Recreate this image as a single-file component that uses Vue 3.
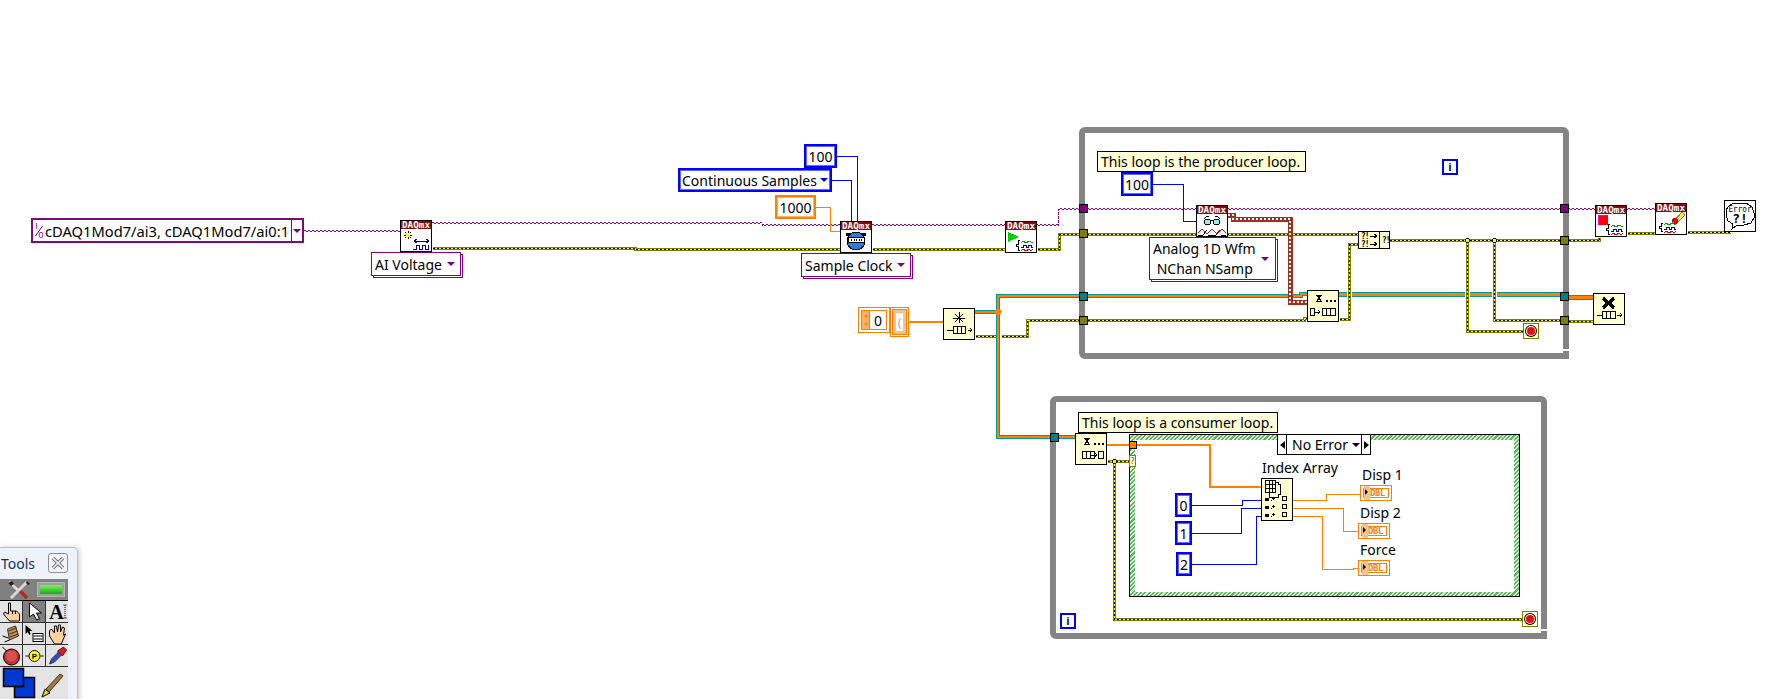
<script setup>
import { computed } from 'vue'

const layers = {
  task: ['task-a', 'task-b'],
  err: ['err-a', 'err-b', 'err-c'],
  wave: ['wave-a', 'wave-b'],
  queue: ['queue-a', 'queue-b'],
  qbold: ['qbold-a', 'qbold-b'],
  arr: ['arr'],
  num: ['num'],
  int: ['int']
}

const wires = [
  ['task', 'M304 230H400'],
  ['task', 'M432 222H762V224H840'],
  ['task', 'M872 224H1058V208H1083'],
  ['task', 'M1087 208H1563'],
  ['task', 'M1568 208H1655'],
  ['err', 'M432 248H635V249H840'],
  ['err', 'M872 249H1005'],
  ['err', 'M1037 249H1059V234H1358'],
  ['err', 'M975 336H995'],
  ['err', 'M1001 336H1027V320H1083'],
  ['err', 'M1083 320H1304V318H1307'],
  ['err', 'M1339 319H1349V244H1358'],
  ['err', 'M1389 240H1563'],
  ['err', 'M1467 240V331H1523'],
  ['err', 'M1494 240V320H1563'],
  ['err', 'M1564 240H1599V237'],
  ['err', 'M1627 233H1655'],
  ['err', 'M1687 232H1730'],
  ['err', 'M1564 321H1593'],
  ['err', 'M1107 461H1129'],
  ['err', 'M1114 461V619H1522'],
  ['queue', 'M975 312H998'],
  ['queue', 'M1083 296H998V437H1075'],
  ['queue', 'M1083 296H1301V294H1307'],
  ['qbold', 'M1339 294H1347'],
  ['qbold', 'M1352 294H1465'],
  ['qbold', 'M1470 294H1492'],
  ['qbold', 'M1497 294H1563'],
  ['qbold', 'M1564 297H1593'],
  ['wave', 'M1228 215H1233V219H1290V302H1307'],
  ['arr', 'M909 322H943'],
  ['arr', 'M1107 445H1129'],
  ['arr', 'M1137 445H1210V487H1261'],
  ['int', 'M837 156.5H857.5V221'],
  ['int', 'M832 180.5H851.5V221'],
  ['num', 'M816 207.5H830.5V231.5H840'],
  ['int', 'M1153 184.5H1183.5V221.5H1196'],
  ['int', 'M1192 505.5H1242.5V500.5H1261'],
  ['int', 'M1192 533.5H1241.5V508.5H1261'],
  ['int', 'M1192 564.5H1256.5V516.5H1261'],
  ['num', 'M1293 500.5H1326.5V494.5H1360'],
  ['num', 'M1293 508.5H1343.5V531.5H1358'],
  ['num', 'M1293 516.5H1322.5V569.5H1353.5V568.5H1358']
]

const strokes = computed(() =>
  wires.flatMap(([kind, d]) => layers[kind].map(cls => ({ d, cls })))
)

const loops = [
  { x: 1079, y: 127, w: 490, h: 232 },
  { x: 1050, y: 396, w: 497, h: 243 }
]

const tunnels = [
  { x: 1079, y: 204, c: 'purple' },
  { x: 1079, y: 229, c: 'olive' },
  { x: 1079, y: 292, c: 'teal' },
  { x: 1079, y: 316, c: 'olive' },
  { x: 1560, y: 204, c: 'purple' },
  { x: 1560, y: 236, c: 'olive' },
  { x: 1560, y: 292, c: 'teal' },
  { x: 1560, y: 316, c: 'olive' },
  { x: 1050, y: 433, c: 'teal' }
]

const constants = [
  { x: 804, y: 144, w: 33, h: 24, t: '100', c: 'blue' },
  { x: 775, y: 195, w: 41, h: 24, t: '1000', c: 'orange' },
  { x: 1121, y: 172, w: 32, h: 24, t: '100', c: 'blue' },
  { x: 1175, y: 493, w: 17, h: 24, t: '0', c: 'blue' },
  { x: 1175, y: 521, w: 17, h: 24, t: '1', c: 'blue' },
  { x: 1176, y: 552, w: 16, h: 24, t: '2', c: 'blue' }
]

const rings = [
  { x: 371, y: 252, w: 90, h: 24, t: 'AI Voltage' },
  { x: 801, y: 253, w: 110, h: 24, t: 'Sample Clock' }
]

const labels = [
  { x: 1262, y: 459, t: 'Index Array' },
  { x: 1362, y: 466, t: 'Disp 1' },
  { x: 1360, y: 504, t: 'Disp 2' },
  { x: 1360, y: 541, t: 'Force' }
]

const indicators = [
  { x: 1360, y: 485 },
  { x: 1358, y: 523 },
  { x: 1358, y: 560 }
]

const iters = [
  { x: 1442, y: 159 },
  { x: 1060, y: 613 }
]

const stops = [
  { x: 1523, y: 323 },
  { x: 1522, y: 611 }
]

const nodes = [
  { x: 400, y: 220, icon: 'create', daq: true },
  { x: 840, y: 221, icon: 'clock', daq: true },
  { x: 1005, y: 221, icon: 'start', daq: true },
  { x: 1196, y: 205, icon: 'read', daq: true },
  { x: 1595, y: 205, icon: 'stop', daq: true },
  { x: 1655, y: 203, icon: 'clear', daq: true },
  { x: 1724, y: 200, icon: 'error' },
  { x: 943, y: 308, icon: 'qcreate', pale: true },
  { x: 1307, y: 290, icon: 'enq', pale: true },
  { x: 1593, y: 293, icon: 'qdestroy', pale: true },
  { x: 1075, y: 433, icon: 'deq', pale: true }
]

const tools = ['hand', 'arrow', 'text', 'spool', 'list', 'grab', 'probe', 'bp', 'dropper']

function box(n) {
  return { left: n.x + 'px', top: n.y + 'px', width: n.w ? n.w + 'px' : undefined, height: n.h ? n.h + 'px' : undefined }
}
</script>

<template>
  <div class="canvas">
    <div v-for="(l, i) in loops" :key="'loop' + i" class="loop" :style="box(l)"></div>

    <!-- case structure -->
    <div class="case">
      <div class="case-inner"></div>
    </div>

    <svg class="wires" width="1788" height="699">
      <path v-for="(s, i) in strokes" :key="i" :d="s.d" :class="s.cls" fill="none" />
      <circle cx="998" cy="312" r="3" fill="#ff8000" />
      <g fill="#ffff00" stroke="#000">
        <circle cx="1467.5" cy="240.5" r="2" />
        <circle cx="1494.5" cy="240.5" r="2" />
        <circle cx="1114.5" cy="461.5" r="2" />
      </g>
    </svg>

    <div v-for="(t, i) in tunnels" :key="'tun' + i" class="tunnel" :class="t.c" :style="box(t)"></div>

    <!-- channel constant -->
    <div class="channel">
      <svg class="io-icon" width="10" height="17" viewBox="0 0 10 17">
        <text x="2.5" y="7" class="io-txt">I</text>
        <text x="7" y="15.5" class="io-txt">0</text>
        <path d="M1.5 14L8.5 4" stroke="#800080" fill="none" />
      </svg>
      <span class="channel-text">cDAQ1Mod7/ai3, cDAQ1Mod7/ai0:1</span>
      <span class="channel-drop"><b class="tri purple-tri"></b></span>
    </div>

    <div class="enum">
      <span>Continuous Samples</span>
      <b class="tri blue-tri"></b>
    </div>

    <div v-for="(c, i) in constants" :key="'c' + i" class="const" :class="c.c" :style="box(c)">{{ c.t }}</div>

    <div v-for="(r, i) in rings" :key="'r' + i" class="ring" :style="box(r)">
      <span>{{ r.t }}</span>
      <b class="tri purple-tri"></b>
    </div>

    <div class="ring ring-big">
      <span>Analog 1D Wfm<br />&nbsp;NChan NSamp</span>
      <b class="tri purple-tri"></b>
    </div>

    <div class="note note-prod">This loop is the producer loop.</div>
    <div class="note note-cons">This loop is a consumer loop.</div>

    <div v-for="(it, i) in iters" :key="'it' + i" class="iter" :style="box(it)">i</div>

    <div v-for="(s, i) in stops" :key="'s' + i" class="stop" :style="box(s)"><span class="stop-dot"></span></div>

    <!-- array constant and element -->
    <div class="numeric">
      <span class="spin"><b class="up"></b><b class="down"></b></span>
      <span class="num-val">0</span>
    </div>
    <div class="arr-const"><span>(</span></div>

    <div v-for="n in nodes" :key="n.icon" class="node" :class="{ pale: n.pale }" :style="box(n)">
      <svg width="30" height="30" viewBox="0 0 30 30">
        <template v-if="n.daq">
          <rect x="0" y="0" width="30" height="8" fill="#8c0a0a" />
          <text x="15" y="7" class="daq" textLength="28" lengthAdjust="spacingAndGlyphs">DAQmx</text>
        </template>

        <g v-if="n.icon === 'create'">
          <path d="M7 10v8M3 14h8M4 11l6 6M10 11l-6 6" stroke="#000" stroke-width="1" />
          <rect x="5" y="12" width="4" height="4" fill="#ffff00" />
          <path d="M13 20h15M13 20l3-2M13 20l3 2M28 20l-3-2M28 20l-3 2" stroke="#0000a0" fill="none" />
          <path d="M12 28h3v-4h3v4h3v-4h3v4h3v-4" stroke="#0000a0" fill="none" />
        </g>

        <g v-if="n.icon === 'clock'">
          <rect x="5" y="11" width="20" height="3" fill="#000" />
          <circle cx="15" cy="19" r="9" fill="#2c7ce0" stroke="#000" />
          <rect x="7" y="15" width="16" height="5" fill="#fff" stroke="#000" />
          <path d="M10 17v2M13 17v2M15 17v2M18 17v2M20 17v2" stroke="#000" />
        </g>

        <g v-if="n.icon === 'start'">
          <path d="M2 10l11 5-11 5z" fill="#00d000" />
        </g>

        <g v-if="n.icon === 'stop'">
          <rect x="2" y="9" width="10" height="10" fill="#ff00c0" />
          <rect x="3" y="10" width="9" height="9" fill="#ff0000" />
        </g>

        <g v-if="n.icon === 'clear'">
          <path d="M19 16l7-8 3 3-7 7z" fill="#ffe060" stroke="#a08020" />
          <circle cx="19" cy="17" r="3" fill="#e00000" />
          <path d="M14 20l4-2" stroke="#888" />
        </g>

        <g v-if="n.icon === 'start' || n.icon === 'stop' || n.icon === 'clear'">
          <path :d="n.icon === 'clear' ? 'M7 19h-2v3h-2v2h2v3h2' : 'M14 18h-2v4h-2v2h2v4h2'" stroke="#000" fill="none" />
          <g :transform="n.icon === 'clear' ? 'translate(-7,0)' : ''">
            <path d="M15 21l2-2 3 2 3-2 2 1 2 1" stroke="#00a000" fill="none" />
            <path d="M15 25h2v-2h3v2h2v-2h3v2h2" stroke="#0000d0" fill="none" />
            <path d="M15 29l2-2 3 2 3-2 2 2 2-2" stroke="#e00000" fill="none" />
          </g>
        </g>

        <g v-if="n.icon === 'read'">
          <circle cx="10.5" cy="16" r="3" fill="#a0e8e8" stroke="#000" />
          <circle cx="19.5" cy="16" r="3" fill="#a0e8e8" stroke="#000" />
          <path d="M13 14h4M7 13l3-3h2M23 13l-3-3h-2" stroke="#000" fill="none" />
          <path d="M1 29h5M11 29h8M24 29h5M6 29l4-5M19 29l4-5" stroke="#000" fill="none" />
          <path d="M1 27l4-4 5 5 5-5 5 5 5-5 4 4" stroke="#e00000" fill="none" />
        </g>

        <g v-if="n.icon === 'error'">
          <path d="M9 2h12l6 4 2 6v5l-3 5-7 2h-7l-5 4 1-5-5-3-2-6v-5l3-4z" fill="#fff" stroke="#000" />
          <text x="15" y="11" class="err-word" textLength="23" lengthAdjust="spacingAndGlyphs">Error</text>
          <text x="15" y="22" class="err-mark">?!</text>
        </g>

        <g v-if="n.icon === 'qcreate'" stroke="#000" fill="none">
          <path d="M15 3v11M9 9h12M11 5l8 8M19 5l-8 8" />
          <path d="M3 21h7M24 21h4M26 19l2 2-2 2" />
          <rect x="9.5" y="17.5" width="12" height="7" fill="#ffffd2" />
          <path d="M13.5 17v8M17.5 17v8" />
        </g>

        <g v-if="n.icon === 'enq'" stroke="#000" fill="none">
          <path d="M8 4h6M8 10h6M9 4l4 6M13 4l-4 6" />
          <path d="M18 10h2M22 10h2M26 10h2" stroke-width="2" />
          <rect x="2.5" y="17.5" width="4" height="7" />
          <path d="M6 21h6M10 19l2 2-2 2" />
          <rect x="14.5" y="17.5" width="13" height="7" />
          <path d="M18.5 18v7M22.5 18v7" />
        </g>

        <g v-if="n.icon === 'deq'" stroke="#000" fill="none">
          <path d="M8 4h6M8 10h6M9 4l4 6M13 4l-4 6" />
          <path d="M18 10h2M22 10h2M26 10h2" stroke-width="2" />
          <rect x="6.5" y="17.5" width="12" height="7" />
          <path d="M10.5 18v7M14.5 18v7" />
          <path d="M15 21h6M19 19l2 2-2 2" />
          <rect x="22.5" y="17.5" width="5" height="7" />
        </g>

        <g v-if="n.icon === 'qdestroy'" stroke="#000" fill="none">
          <path d="M9 4l11 10M20 4l-11 10" stroke-width="3.5" />
          <path d="M3 21h6M23 21h5M26 19l2 2-2 2" />
          <rect x="8.5" y="17.5" width="13" height="7" fill="#ffffd2" />
          <path d="M12.5 18v7M16.5 18v7" />
        </g>
      </svg>
    </div>

    <!-- merge errors -->
    <div class="merge">
      <svg width="30" height="16" viewBox="0 0 30 16">
        <text x="2" y="7" class="merge-txt">?!</text>
        <text x="2" y="15" class="merge-txt">?!</text>
        <path d="M11 4h7M15 2l3 2-3 2M11 12h7M15 10l3 2-3 2" stroke="#000" fill="none" />
        <path d="M20.5 0v16" stroke="#000" />
        <text x="23" y="11" class="merge-txt">?!</text>
      </svg>
    </div>

    <!-- case selector -->
    <div class="selector">
      <span class="sel-arrow"><b class="arrow-left"></b></span>
      <span class="sel-text">No Error</span>
      <b class="tri black-tri"></b>
      <span class="sel-arrow sel-right"><b class="arrow-right"></b></span>
    </div>
    <div class="tunnel-arr"></div>
    <div class="sel-term">?</div>

    <!-- index array -->
    <div class="index">
      <svg width="30" height="41" viewBox="0 0 30 41">
        <g fill="none" stroke="#000">
          <path d="M7.5 3.5h9v2h2v10h-2v3h-9z" fill="#ffffd2" />
          <path d="M3.5 1.5h10v12h-10zM3.5 5.5h10M3.5 9.5h10M7.5 1.5v12M10.5 1.5v12" fill="#ffffd2" />
        </g>
        <g v-for="r in [21, 29, 37]" :key="r">
          <rect x="3" :y="r - 2" width="4" height="3" fill="#000" />
          <path :d="`M9.5 ${r}v1M11 ${r - 3}v3M9.5 ${r - 2}h3`" stroke="#000" fill="none" />
          <rect x="20.5" :y="r - 3.5" width="4" height="4" fill="none" stroke="#000" />
        </g>
      </svg>
    </div>

    <div v-for="(l, i) in labels" :key="'l' + i" class="label" :style="box(l)">{{ l.t }}</div>

    <div v-for="(d, i) in indicators" :key="'d' + i" class="dbl" :style="box(d)">
      <span class="dbl-inner"><b class="dbl-tip"></b><span class="dbl-txt">DBL</span></span>
    </div>

    <!-- tools palette -->
    <div class="palette">
      <div class="pal-head">
        <span class="pal-title">Tools</span>
        <span class="pal-close">
          <svg width="14" height="14" viewBox="0 0 14 14">
            <path d="M2 2l10 10M12 2L2 12" stroke="#6c7076" stroke-width="3.5" fill="none" />
            <path d="M2 2l10 10M12 2L2 12" stroke="#f4f6f8" stroke-width="1.5" fill="none" />
          </svg>
        </span>
      </div>
      <div class="pal-auto">
        <svg width="24" height="20" viewBox="0 0 24 20">
          <path d="M12 10l8 8" stroke="#c02020" stroke-width="3.5" />
          <path d="M2 2l10 9" stroke="#e0e0e0" stroke-width="2.5" />
          <path d="M20 2L4 18" stroke="#d8d8d8" stroke-width="3" />
          <path d="M1 3l4-2 2 3-3 2zM20 1l3 3-2 1-2-2z" fill="#202020" />
        </svg>
        <span class="pal-led"><i></i></span>
      </div>
      <div class="pal-grid">
        <span v-for="t in tools" :key="t" class="pal-cell" :class="{ on: t === 'arrow' }">
          <svg width="21" height="20" viewBox="0 0 20 20">
            <g v-if="t === 'hand'">
              <path d="M7 1h2v8h6l3 3v7H8l-6-7 1-2 4 2z" fill="#ffd0a0" stroke="#000" />
              <path d="M11 9v3M14 9v3" stroke="#000" />
            </g>
            <path v-if="t === 'arrow'" d="M5 1v14l4-3 3 6 3-1-3-6h5z" fill="#fff" stroke="#000" />
            <g v-if="t === 'text'">
              <text x="9" y="17" class="pal-a">A</text>
              <path d="M16 3h3M16 16h3M17.5 3v13" stroke="#000" stroke-dasharray="1 1" />
            </g>
            <g v-if="t === 'spool'">
              <path d="M6 5l8-3 3 10-9 4z" fill="#c09058" stroke="#403020" />
              <path d="M7 7l8-3M8 10l8-3M8 13l9-3" stroke="#403020" />
              <path d="M1 12l6 2M3 18l5-2" stroke="#000" />
            </g>
            <g v-if="t === 'list'">
              <path d="M1 1v9l2-2 2 3 1-1-1-3h3z" fill="#000" />
              <rect x="8.5" y="9.5" width="10" height="8" fill="#fff" stroke="#000" />
              <path d="M9 12h9M9 15h9" stroke="#000" />
            </g>
            <path v-if="t === 'grab'" d="M2 7l2-2 3 4 0-7 2 0 1 6 1-7 2 0 0 7 2-5 2 1-1 7 2-1-3 7-1 3H7L2 12z" fill="#ffd0a0" stroke="#000" />
            <g v-if="t === 'probe'">
              <path d="M1 1l5 5" stroke="#000" />
              <circle cx="10" cy="11" r="8" fill="#c83030" stroke="#000" />
              <circle cx="10" cy="10" r="5.5" fill="#d85050" />
            </g>
            <g v-if="t === 'bp'">
              <circle cx="10" cy="10" r="5.5" fill="#ffff00" stroke="#000" />
              <text x="10" y="13" class="pal-p">P</text>
              <path d="M1 10h3M16 10h3" stroke="#000" />
            </g>
            <g v-if="t === 'dropper'">
              <path d="M2 18l2-5 7-7 3 3-7 7z" fill="#3050c0" stroke="#303060" />
              <path d="M10 5l6-4 3 3-4 6z" fill="#d02020" stroke="#701010" />
            </g>
          </svg>
        </span>
      </div>
      <div class="pal-colors">
        <svg width="68" height="32" viewBox="0 0 68 32">
          <rect x="14.5" y="10.5" width="20" height="20" fill="#0038d0" stroke="#000" stroke-width="1.5" />
          <rect x="3.5" y="1.5" width="20" height="18" fill="#0038d0" stroke="#000" stroke-width="1.5" />
          <path d="M42 30l3-8 5 4z" fill="#f0d020" stroke="#000" />
          <path d="M46 22l14-15 3 2-14 16z" fill="#a07840" stroke="#403020" />
        </svg>
      </div>
    </div>
  </div>
</template>

<style>
html, body {
  margin: 0;
  background: #fff;
}
</style>

<style scoped>
.canvas {
  position: relative;
  width: 1788px;
  height: 699px;
  overflow: hidden;
  background: #fff;
  font-family: "Noto Sans", "Open Sans", sans-serif;
  font-size: 14px;
  color: #000;
}
.canvas > * {
  position: absolute;
  box-sizing: border-box;
}
.wires {
  left: 0;
  top: 0;
  shape-rendering: crispEdges;
}

.task-a { stroke: #800080; stroke-width: 1; stroke-dasharray: 2 2; transform: translateY(0.5px); }
.task-b { stroke: #800080; stroke-width: 1; stroke-dasharray: 2 2; stroke-dashoffset: 2; transform: translateY(1.5px); }
.err-a { stroke: #808000; stroke-width: 3; transform: translate(0.5px, 0.5px); }
.err-b { stroke: #ffff00; stroke-width: 1; transform: translate(0.5px, 0.5px); }
.err-c { stroke: #000; stroke-width: 1; stroke-dasharray: 2 2; transform: translate(0.5px, 0.5px); }
.wave-a { stroke: #a03020; stroke-width: 5; }
.wave-b { stroke: #fff; stroke-width: 2; stroke-dasharray: 2 2; }
.queue-a { stroke: #009a9a; stroke-width: 4; }
.queue-b { stroke: #ff8000; stroke-width: 2; }
.qbold-a { stroke: #009a9a; stroke-width: 5; }
.qbold-b { stroke: #ff8000; stroke-width: 3; }
.arr { stroke: #ff8000; stroke-width: 2; }
.num { stroke: #ff8000; stroke-width: 1; }
.int { stroke: #0000ff; stroke-width: 1; }

.loop {
  border: 6px solid #848484;
  border-radius: 6px 6px 0 6px;
}
.loop::after {
  content: "";
  position: absolute;
  right: -6px;
  bottom: 2px;
  width: 6px;
  height: 2px;
  background: #fff;
}

.case {
  left: 1129px;
  top: 434px;
  width: 391px;
  height: 163px;
  border: 1px solid #000;
  padding: 5px 5px 4px;
  background: repeating-linear-gradient(135deg, #d6f2d6 0 1.5px, #5fb05f 1.5px 3px);
}
.case-inner {
  width: 100%;
  height: 100%;
  background: #fff;
}

.tunnel {
  width: 9px;
  height: 9px;
  border: 1px solid #000;
}
.purple { background: #800080; }
.olive { background: #808000; }
.teal { background: #008080; }

.channel {
  left: 31px;
  top: 218px;
  width: 273px;
  height: 25px;
  border: 2px solid #7c0a7c;
  background: #fff;
  display: flex;
  align-items: center;
}
.io-icon {
  flex: none;
  margin-left: 1px;
}
.io-txt {
  font-family: "Liberation Sans", sans-serif;
  font-size: 9px;
  fill: #800080;
  text-anchor: middle;
}
.channel-text {
  margin-left: 1px;
  flex: 1;
  font-size: 14.7px;
  white-space: nowrap;
}
.channel-drop {
  width: 10px;
  height: 100%;
  border-left: 1px solid #800080;
  display: flex;
  align-items: center;
  justify-content: center;
}

.tri {
  display: inline-block;
  width: 0;
  height: 0;
  border-left: 4px solid transparent;
  border-right: 4px solid transparent;
  border-top: 4px solid #000;
}
.purple-tri { border-top-color: #800080; }
.blue-tri { border-top-color: #0000ff; }
.black-tri { border-top-color: #000; }

.enum {
  left: 678px;
  top: 168px;
  width: 154px;
  height: 24px;
  border: 2px solid #0000ff;
  box-shadow: inset 0 0 0 1px rgba(0, 0, 255, 0.6);
  background: #fff;
  display: flex;
  align-items: center;
  justify-content: space-between;
  padding: 0 2px;
  white-space: nowrap;
}

.const {
  background: #fff;
  border: 2px solid;
  display: flex;
  align-items: center;
  justify-content: center;
}
.const.blue {
  border-color: #0000ff;
  box-shadow: inset 0 0 0 1px rgba(0, 0, 255, 0.6);
}
.const.orange {
  border-color: #ff8000;
  box-shadow: inset 0 0 0 1px rgba(255, 128, 0, 0.6);
}

.ring {
  background: #fff;
  border: 1px solid #800080;
  box-shadow: 2px 2px 0 -1px #fff, 2px 2px 0 0 #800080;
  display: flex;
  align-items: center;
  justify-content: space-between;
  padding: 0 5px 0 3px;
  white-space: nowrap;
}
.ring-big {
  left: 1149px;
  top: 237px;
  width: 127px;
  height: 43px;
  line-height: 20px;
  padding-right: 6px;
}

.note {
  background: #ffffd8;
  border: 1px solid #000;
  padding-left: 3px;
  white-space: nowrap;
  display: flex;
  align-items: center;
}
.note-prod {
  left: 1097px;
  top: 151px;
  width: 209px;
  height: 21px;
}
.note-cons {
  left: 1078px;
  top: 412px;
  width: 200px;
  height: 21px;
}

.iter {
  width: 16px;
  height: 16px;
  border: 2px solid #0000ff;
  background: #fff;
  color: #0000a0;
  font-weight: 700;
  font-size: 11px;
  line-height: 12px;
  text-align: center;
}

.stop {
  width: 16px;
  height: 16px;
  border: 1px solid #808000;
  background: #ffffd8;
  display: flex;
  align-items: center;
  justify-content: center;
}
.stop-dot {
  width: 8px;
  height: 8px;
  border-radius: 50%;
  background: #ff0000;
  box-shadow: 0 0 0 1px #fff, 0 0 0 2px #000;
}

.numeric {
  left: 858px;
  top: 307px;
  width: 32px;
  height: 26px;
  border: 1px solid #ff8000;
  padding: 2px;
  display: flex;
  background: #fff;
}
.spin {
  width: 7px;
  border: 1px solid #ff8000;
  background: #ffb060;
  display: flex;
  flex-direction: column;
  align-items: center;
  justify-content: space-around;
}
.up, .down {
  width: 0;
  height: 0;
  border-left: 2px solid transparent;
  border-right: 2px solid transparent;
}
.up { border-bottom: 3px solid #ff8000; }
.down { border-top: 3px solid #ff8000; }
.num-val {
  flex: 1;
  border: 1px solid #ff8000;
  border-left: none;
  display: flex;
  align-items: center;
  justify-content: center;
  font-size: 14px;
}
.arr-const {
  left: 890px;
  top: 307px;
  width: 19px;
  height: 30px;
  border: 1px solid #ff8000;
  padding: 2px;
  background: #fff;
}
.arr-const span {
  display: flex;
  width: 100%;
  height: 100%;
  box-sizing: border-box;
  border: 3px solid #ffc090;
  outline: 1px solid #ff8000;
  align-items: center;
  justify-content: center;
  color: #a0a8c0;
  font-size: 12px;
}

.node {
  width: 32px;
  height: 32px;
  border: 1px solid #000;
  background: #fff;
}
.node svg {
  display: block;
  shape-rendering: crispEdges;
}
.node.pale {
  background: #ffffd2;
}
.daq {
  font-family: "DejaVu Sans Mono", monospace;
  font-size: 9px;
  font-weight: 700;
  fill: #fff;
  text-anchor: middle;
}
.err-word {
  font-family: "DejaVu Sans Mono", monospace;
  font-size: 9px;
  text-anchor: middle;
}
.err-mark {
  font-family: "DejaVu Sans Mono", monospace;
  font-size: 13px;
  font-weight: 700;
  text-anchor: middle;
}

.merge {
  left: 1358px;
  top: 231px;
  width: 32px;
  height: 18px;
  border: 1px solid #000;
  background: #ffffd2;
}
.merge svg {
  display: block;
  shape-rendering: crispEdges;
}
.merge-txt {
  font-family: "DejaVu Sans Mono", monospace;
  font-size: 8px;
  font-weight: 700;
  letter-spacing: -1px;
}

.selector {
  left: 1277px;
  top: 434px;
  width: 94px;
  height: 21px;
  border: 1px solid #000;
  background: #fff;
  display: flex;
  align-items: center;
}
.sel-arrow {
  width: 8px;
  height: 100%;
  border-right: 1px solid #000;
  display: flex;
  align-items: center;
  justify-content: center;
  flex: none;
}
.sel-right {
  border-right: none;
  border-left: 1px solid #000;
}
.sel-text {
  flex: 1;
  padding-left: 5px;
  white-space: nowrap;
}
.selector .tri {
  margin-right: 1px;
}
.arrow-left, .arrow-right {
  width: 0;
  height: 0;
  border-top: 4px solid transparent;
  border-bottom: 4px solid transparent;
}
.arrow-left { border-right: 5px solid #000; }
.arrow-right { border-left: 5px solid #000; }

.tunnel-arr {
  left: 1129px;
  top: 441px;
  width: 8px;
  height: 8px;
  border: 1px solid #000;
  background: #ff8000;
}
.sel-term {
  left: 1129px;
  top: 455px;
  width: 7px;
  height: 12px;
  border: 1px solid #808000;
  background: #ffffd8;
  font-size: 9px;
  line-height: 10px;
  text-align: center;
  color: #606000;
}

.index {
  left: 1261px;
  top: 478px;
  width: 32px;
  height: 43px;
  border: 1px solid #000;
  background: #ffffd2;
}
.index svg {
  display: block;
  shape-rendering: crispEdges;
}

.label {
  white-space: nowrap;
  line-height: 18px;
}

.dbl {
  width: 32px;
  height: 16px;
  border: 1px solid #ff8000;
  padding: 2px;
  background: #fff;
}
.dbl-inner {
  display: flex;
  height: 100%;
  align-items: center;
  border: 1px solid #ff8000;
  box-sizing: border-box;
}
.dbl-tip {
  width: 6px;
  height: 14px;
  background: #ffc090;
  position: relative;
  flex: none;
}
.dbl-tip::after {
  content: "";
  position: absolute;
  left: 1px;
  top: 3px;
  border-top: 3px solid transparent;
  border-bottom: 3px solid transparent;
  border-left: 3px solid #000;
}
.dbl-txt {
  font-family: "DejaVu Sans Mono", monospace;
  font-size: 9px;
  font-weight: 700;
  color: #ff8000;
  letter-spacing: -0.4px;
}

.palette {
  left: 0;
  top: 547px;
  width: 78px;
  height: 160px;
  background: #eef3f9;
  border: 1px solid #b8bec6;
  border-left: none;
  border-radius: 0 5px 0 0;
  box-shadow: 2px 0 5px rgba(0, 0, 0, 0.18);
  padding-right: 9px;
}
.pal-head {
  height: 31px;
  display: flex;
  align-items: center;
  justify-content: space-between;
  padding-bottom: 1px;
  box-sizing: border-box;
}
.pal-title {
  font-size: 14px;
  padding-left: 1px;
  color: #10305c;
}
.pal-close {
  width: 20px;
  height: 20px;
  border: 1px solid #8a8e94;
  border-radius: 3px;
  box-sizing: border-box;
  background: #f2f4f7;
  display: flex;
  align-items: center;
  justify-content: center;
}
.pal-auto {
  height: 21px;
  background: #808080;
  display: flex;
  align-items: center;
  justify-content: space-between;
  padding: 0 3px 0 7px;
  border-bottom: 1px solid #000;
}
.pal-led {
  width: 28px;
  height: 15px;
  background: #9aa09a;
  border: 1px solid #b0b8b0;
  box-sizing: border-box;
  padding: 2px;
  display: flex;
}
.pal-led i {
  flex: 1;
  background: linear-gradient(180deg, #80f060, #10b010);
}
.pal-grid {
  display: grid;
  grid-template-columns: repeat(3, 22px);
  grid-auto-rows: 21px;
  gap: 1px;
  background: #303030;
  padding-bottom: 1px;
}
.pal-cell {
  background: #e4e4e4;
  display: flex;
  align-items: center;
  justify-content: center;
}
.pal-cell.on {
  background: #808080;
}
.pal-a {
  font-family: "Liberation Serif", serif;
  font-size: 20px;
  font-weight: 700;
  text-anchor: middle;
}
.pal-p {
  font-family: "Liberation Sans", sans-serif;
  font-size: 8px;
  font-weight: 700;
  text-anchor: middle;
}
.pal-colors {
  height: 32px;
  background: #e4e4e4;
}
.pal-colors svg {
  display: block;
}
</style>
